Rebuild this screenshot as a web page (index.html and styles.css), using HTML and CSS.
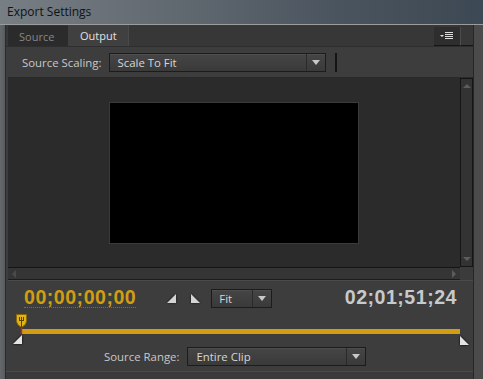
FILE: index.html
```html
<!DOCTYPE html>
<html lang="en">
<head>
    <meta charset="UTF-8">
    <title>Export Settings</title>
    <link rel="stylesheet" href="styles.css">
</head>
<body>
    <div class="titlebar">Export Settings</div>
    <div class="window">
        <div class="frame-l"></div>
        <div class="main">
            <div class="tabs">
                <div class="tab off">Source</div>
                <div class="tab on">Output</div>
                <div class="tab-fill"></div>
                <div class="menu-btn">
                    <svg width="14" height="10" viewBox="0 0 14 10">
                        <path d="M0 4h4l-2 2z" fill="#ddd"/>
                        <path d="M5 1.5h8M5 3.5h8M5 5.5h8M5 7.5h8" stroke="#ddd" stroke-width="1"/>
                    </svg>
                </div>
                <div class="menu-end"></div>
            </div>

            <div class="scaling">
                <span class="label">Source Scaling:</span>
                <div class="select wide">
                    <span class="val">Scale To Fit</span>
                    <span class="arrow"></span>
                </div>
                <div class="sep"></div>
            </div>

            <div class="preview">
                <div class="viewport"><div class="frame-black"></div></div>
                <div class="vscroll"><span class="up"></span><span class="down"></span></div>
                <div class="hscroll"><span class="left"></span><span class="right"></span></div>
                <div class="corner"></div>
            </div>

            <div class="timecodes">
                <span class="tc in">00;00;00;00</span>
                <span class="tri tri-l"></span>
                <span class="tri tri-r"></span>
                <div class="select fit">
                    <span class="val">Fit</span>
                    <span class="arrow"></span>
                </div>
                <span class="tc dur">02;01;51;24</span>
            </div>

            <div class="timeline">
                <div class="bar"></div>
                <svg class="playhead" width="11" height="20" viewBox="0 0 11 20">
                    <path d="M0.5 0.5h10v6c0 3-2 5-5 7c-3-2-5-4-5-7z" fill="#e2b316" stroke="#8a6a08"/>
                    <path d="M3.5 3v3M5.5 3v3M7.5 3v3M3 6.5h5M5.5 6.5v8" stroke="#5a4304" stroke-width="1"/>
                    <path d="M5.5 14v6" stroke="#d0201a" stroke-width="1.4"/>
                </svg>
                <span class="mark mark-in"></span>
                <span class="mark mark-out"></span>
            </div>

            <div class="range">
                <span class="label">Source Range:</span>
                <div class="select mid">
                    <span class="val">Entire Clip</span>
                    <span class="arrow"></span>
                </div>
            </div>
            <div class="bottom"></div>
        </div>
        <div class="frame-r"></div>
    </div>
</body>
</html>
```

FILE: styles.css
```css
html, body{
    margin: 0;
    height: 100%;
    overflow: hidden;
}
body{
    background-color: #3d3d3d;
    font-family: 'Open Sans', 'Liberation Sans', sans-serif;
    font-size: 11px;
    color: #d0d0d0;
}
.titlebar{
    height: 24px;
    box-sizing: border-box;
    padding: 3px 0 0 7px;
    font-size: 12px;
    color: #101214;
    background: linear-gradient(90deg, #777e84 0%, #626a71 35%, #4a545e 70%, #3c4853 100%);
}
.window{
    display: flex;
    height: 355px;
    border-top: 1px solid #9a9c9e;
}
.frame-l{
    width: 5px;
    background: linear-gradient(90deg, #66696c, #595c5f);
    border-right: 1px solid #2a2a2a;
}
.frame-r{
    width: 9px;
    background-color: #4b4b4b;
    border-left: 1px solid #262626;
}
.main{
    flex: 1;
    display: flex;
    flex-direction: column;
    background-color: #3d3d3d;
}

/* tabs */
.tabs{
    display: flex;
    height: 21px;
    background-color: #373737;
    border-bottom: 1px solid #2e2e2e;
    padding-left: 2px;
}
.tab{
    display: flex;
    align-items: center;
    box-sizing: border-box;
}
.tab.off{
    width: 60px;
    padding-left: 11px;
    color: #868686;
    background-color: #2b2b2b;
    border-top: 1px solid #343434;
}
.tab.on{
    width: 61px;
    padding-left: 12px;
    color: #e2e2e2;
    background-color: #404040;
    border-right: 1px solid #4a4a4a;
}
.tab-fill{
    flex: 1;
}
.menu-btn{
    width: 26px;
    margin-top: 2px;
    display: flex;
    align-items: center;
    justify-content: center;
    background-color: #2e2e2e;
    border-bottom: 1px solid #151515;
}
.menu-end{
    width: 12px;
    margin-top: 2px;
    background-color: #383838;
    border-left: 1px solid #4c4c4c;
    border-bottom: 1px solid #151515;
}

/* rows */
.scaling{
    display: flex;
    align-items: center;
    height: 29px;
    padding-left: 16px;
    padding-top: 1px;
}
.label{
    color: #c8c8c8;
    font-size: 11.4px;
}
.select{
    display: flex;
    align-items: stretch;
    box-sizing: border-box;
    height: 19px;
    background: linear-gradient(#454545, #3a3a3a);
    border: 1px solid #1c1c1c;
    box-shadow: inset 0 1px 0 #4e4e4e;
}
.select .val{
    flex: 1;
    display: flex;
    align-items: center;
    padding-left: 8px;
    color: #d6d6d6;
    font-size: 11.4px;
}
.select .arrow{
    width: 18px;
    border-left: 1px solid #2a2a2a;
    position: relative;
}
.select .arrow::after{
    content: "";
    position: absolute;
    left: 5px;
    top: 6px;
    border-left: 4px solid transparent;
    border-right: 4px solid transparent;
    border-top: 5px solid #c8c8c8;
}
.select.wide{
    width: 217px;
    margin-left: 7px;
}
.sep{
    width: 2px;
    height: 19px;
    background-color: #151515;
    margin-left: 9px;
}

/* preview */
.preview{
    display: grid;
    grid-template-columns: 452px 13px;
    grid-template-rows: 189px 13px;
    margin-left: 2px;
    border-top: 1px solid #2a2a2a;
    border-bottom: 1px solid #4a4a4a;
}
.viewport{
    background-color: #2b2b2b;
    display: flex;
    align-items: center;
    justify-content: center;
}
.frame-black{
    width: 248px;
    height: 140px;
    background-color: #000;
    box-shadow: 0 0 0 1px #3a3a3a;
}
.vscroll, .hscroll{
    background-color: #333;
    position: relative;
    box-sizing: border-box;
}
.vscroll{
    border: 1px solid #151515;
}
.hscroll{
    border-top: 1px solid #151515;
    border-bottom: 1px solid #1c1c1c;
    background-color: #353535;
}
.corner{
    background-color: #3b3b3b;
}
.up, .down, .left, .right{
    position: absolute;
    width: 0;
    height: 0;
}
.up{
    left: 2px;
    top: 5px;
    border-left: 4px solid transparent;
    border-right: 4px solid transparent;
    border-bottom: 4px solid #5c5c5c;
}
.down{
    left: 2px;
    bottom: 5px;
    border-left: 4px solid transparent;
    border-right: 4px solid transparent;
    border-top: 4px solid #5c5c5c;
}
.left{
    left: 4px;
    top: 2px;
    border-top: 4px solid transparent;
    border-bottom: 4px solid transparent;
    border-right: 4px solid #4a4a4a;
}
.right{
    right: 4px;
    top: 2px;
    border-top: 4px solid transparent;
    border-bottom: 4px solid transparent;
    border-left: 4px solid #5c5c5c;
}

/* timecodes */
.timecodes{
    display: flex;
    align-items: center;
    height: 33px;
    padding-left: 18px;
}
.tc{
    font-family: 'Liberation Sans', Arial, sans-serif;
    font-weight: bold;
    font-size: 19.6px;
    letter-spacing: 0.5px;
}
.tc.in{
    color: #d19d12;
    border-bottom: 1px dotted #8a6c20;
    line-height: 19px;
}
.tc.dur{
    color: #c6cace;
    margin-left: auto;
    margin-right: 16px;
}
.tri{
    width: 0;
    height: 0;
    border-bottom: 9px solid #d4d4d4;
    margin-top: 2px;
    filter: drop-shadow(0 0 1px #111);
}
.tri-l{
    margin-left: 31px;
    border-left: 9px solid transparent;
}
.tri-r{
    margin-left: 15px;
    border-right: 9px solid transparent;
}
.select.fit{
    width: 61px;
    margin-left: 11px;
    margin-top: 1px;
}
.select.fit .val{
    padding-left: 7px;
}

/* timeline */
.timeline{
    position: relative;
    height: 33px;
}
.bar{
    position: absolute;
    left: 15px;
    right: 13px;
    top: 15px;
    height: 5px;
    background-color: #d29d12;
}
.playhead{
    position: absolute;
    left: 10px;
    top: 0;
}
.mark{
    position: absolute;
    top: 21px;
    width: 0;
    height: 0;
    border-bottom: 9px solid #e4e4e4;
    filter: drop-shadow(0 0 1px #000);
}
.mark-in{
    left: 7px;
    border-left: 9px solid transparent;
}
.mark-out{
    right: 4px;
    top: 22px;
    border-right: 9px solid transparent;
}

/* range */
.range{
    display: flex;
    align-items: center;
    height: 19px;
    padding-left: 98px;
}
.select.mid{
    width: 179px;
    margin-left: 8px;
}
.bottom{
    margin-top: 5px;
    border-top: 1px solid #4a4a4a;
    flex: 1;
    background-color: #3a3a3a;
}
```
